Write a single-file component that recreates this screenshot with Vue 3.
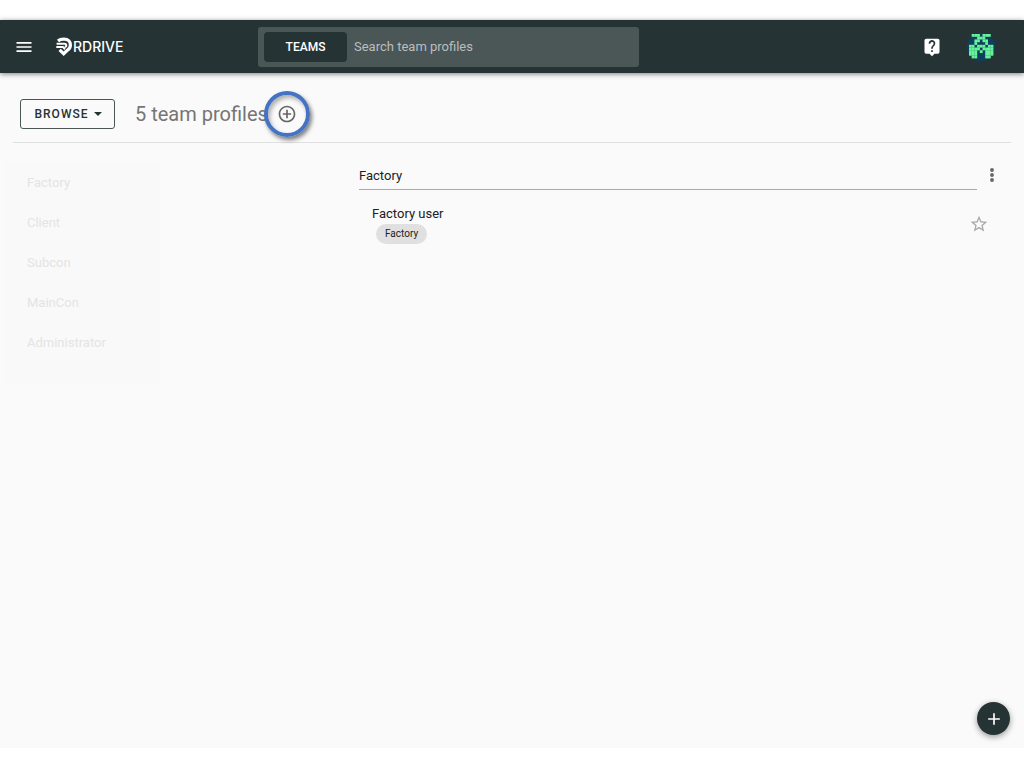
<script setup>
import { ref } from 'vue'

const query = ref('')
const groups = ['Factory', 'Client', 'Subcon', 'MainCon', 'Administrator']
const avatarRows = [
  '.XXX.XXX.',
  '...XXX...',
  '..XX.XX..',
  '..X...X..',
  'XX.XXX.XX',
  'XXXX.XXXX',
  'XXX.X.XXX',
  'XXX...XXX',
  '.XX...XX.',
]
const cells = avatarRows.flatMap((row, y) =>
  [...row].map((c, x) => ({ x, y, on: c === 'X' })).filter((c) => c.on)
)
</script>

<template>
  <div class="page">
    <header class="topbar">
      <div class="brand">
        <button class="icon-btn" aria-label="Menu">
          <svg width="20" height="20" viewBox="0 0 24 24"><path d="M3 18h18v-2H3v2zm0-5h18v-2H3v2zm0-7v2h18V6H3z" fill="#fff" /></svg>
        </button>
        <a class="logo" href="#" aria-label="RDRIVE">
          <svg width="17" height="20" viewBox="0 0 17 20" fill="none" stroke="#fff">
            <path d="M2 4C3.500 2.500 5.500 2.200 8 2.200c4 0 6.400 2.300 6.400 5.800 0 2.600-1.400 4.300-3.200 5.300L7.700 16.700 3.600 12.900" stroke-width="3.200" />
            <path d="M.6 6.700h8c2.300 0 2.300 3.300 0 3.300M.3 10h6.600l2 2.300" stroke-width="1.900" />
          </svg>
          <span>RDRIVE</span>
        </a>
      </div>
      <form class="search" @submit.prevent>
        <button class="scope" type="button">TEAMS</button>
        <input v-model="query" type="text" aria-label="Search team profiles" placeholder="Search team profiles" />
      </form>
      <div class="account">
        <button class="icon-btn" aria-label="Help">
          <svg width="20" height="20" viewBox="0 0 24 24"><path fill="#fff" d="M19 2H5a2 2 0 0 0-2 2v14a2 2 0 0 0 2 2h4l3 3 3-3h4a2 2 0 0 0 2-2V4a2 2 0 0 0-2-2zm-6 16h-2v-2h2v2zm2.070-7.750-.9.920C13.450 11.900 13 12.500 13 14h-2v-.5c0-1.100.45-2.100 1.170-2.830l1.240-1.260A2 2 0 1 0 10 8H8a4 4 0 1 1 7.070 2.250z" /></svg>
        </button>
        <button class="icon-btn" aria-label="Account">
          <svg width="28" height="28" viewBox="0 0 28 28">
            <circle cx="14" cy="14" r="14" fill="#103f5e" />
            <g transform="translate(2 1)" fill="#67f39a">
              <rect v-for="c in cells" :key="c.x + '-' + c.y" :x="c.x * 2.700" :y="c.y * 2.700" width="2.800" height="2.800" />
            </g>
          </svg>
        </button>
      </div>
    </header>

    <div class="toolbar">
      <button class="browse">BROWSE
        <svg width="10" height="6" viewBox="0 0 10 6"><path d="M1 1h8L5 5z" fill="#263335" /></svg>
      </button>
      <h1>5 team profiles</h1>
      <button class="add" aria-label="Add team profile">
        <svg width="20" height="20" viewBox="0 0 24 24"><path fill="#666" d="M13 7h-2v4H7v2h4v4h2v-4h4v-2h-4V7zm-1-5C6.480 2 2 6.480 2 12s4.480 10 10 10 10-4.480 10-10S17.520 2 12 2zm0 18c-4.410 0-8-3.590-8-8s3.590-8 8-8 8 3.590 8 8-3.590 8-8 8z" /></svg>
      </button>
    </div>

    <main class="content">
      <nav class="groups" aria-label="Profile groups">
        <a v-for="g in groups" :key="g" href="#">{{ g }}</a>
      </nav>
      <section class="profiles">
        <div class="group-head">
          <h2>Factory</h2>
          <button class="icon-btn more" aria-label="More options">
            <svg width="20" height="20" viewBox="0 0 24 24" fill="#666"><circle cx="12" cy="6" r="2.300" /><circle cx="12" cy="12" r="2.300" /><circle cx="12" cy="18" r="2.300" /></svg>
          </button>
        </div>
        <article class="profile">
          <div>
            <h3>Factory user</h3>
            <span class="chip">Factory</span>
          </div>
          <button class="icon-btn" aria-label="Add to favourites">
            <svg width="20" height="20" viewBox="0 0 24 24"><path fill="#aaa" d="M22 9.240l-7.190-.62L12 2 9.190 8.630 2 9.240l5.460 4.730L5.820 21 12 17.270 18.180 21l-1.630-7.030L22 9.240zM12 15.400l-3.760 2.270 1-4.280-3.320-2.880 4.380-.38L12 6.100l1.710 4.040 4.380.38-3.320 2.880 1 4.280L12 15.400z" /></svg>
          </button>
        </article>
      </section>
    </main>

    <button class="fab" aria-label="Create">
      <svg width="20" height="20" viewBox="0 0 24 24"><path d="M19 13h-6v6h-2v-6H5v-2h6V5h2v6h6v2z" fill="#fff" /></svg>
    </button>
  </div>
</template>

<style>
body {
  background: #fff;
}
</style>

<style scoped>
.page {
  position: relative;
  box-sizing: border-box;
  min-height: calc(100vh - 40px);
  margin: 20px 0;
  background: #fafafa;
  font-family: Roboto, "Liberation Sans", sans-serif;
  color: #212121;
  display: flow-root;
}
.page button {
  font-family: inherit;
  cursor: pointer;
}
h1,
h2,
h3 {
  margin: 0;
  font-weight: 400;
}
a {
  text-decoration: none;
}
svg {
  display: block;
}
.icon-btn {
  padding: 0;
  border: 0;
  background: none;
}
.topbar {
  display: grid;
  grid-template-columns: 258px minmax(0, 381px) 1fr;
  align-items: center;
  height: 53px;
  background: #263335;
  box-shadow: 0 1px 5px rgba(0, 0, 0, 0.5);
}
.brand {
  display: flex;
  align-items: center;
  gap: 22px;
  padding-left: 14px;
}
.logo {
  display: flex;
  align-items: center;
  color: #fff;
  font: 500 14px/20px Inter, sans-serif;
}
.search {
  display: flex;
  box-sizing: border-box;
  height: 40px;
  padding: 5px 6px;
  border-radius: 3px;
  background: #4b5657;
}
.scope {
  width: 83px;
  border: 0;
  border-radius: 4px;
  background: #263335;
  color: #fff;
  font-size: 12px;
  font-weight: 500;
}
.search input {
  flex: 1;
  min-width: 0;
  padding: 0 7px;
  border: 0;
  outline: 0;
  background: none;
  color: #fff;
  font: 13px/20px Roboto, sans-serif;
}
.search input::placeholder {
  color: #b9bebf;
  opacity: 1;
}
.account {
  display: flex;
  align-items: center;
  justify-content: flex-end;
  gap: 25px;
  padding-right: 29px;
}
.toolbar {
  display: flex;
  align-items: center;
  box-sizing: border-box;
  height: 70px;
  margin: 0 13px;
  padding: 12px 7px 0;
  border-bottom: 1px solid #e0e0e0;
}
.browse {
  display: flex;
  align-items: center;
  justify-content: center;
  gap: 4px;
  box-sizing: border-box;
  width: 95px;
  height: 30px;
  padding: 0 0 0 2px;
  border: 1px solid #4b5657;
  border-radius: 3px;
  background: none;
  color: #263335;
  font-size: 12px;
  font-weight: 500;
  letter-spacing: 1px;
}
h1 {
  margin-left: 20px;
  color: #757575;
  font-size: 20px;
  line-height: 24px;
}
.add {
  display: flex;
  align-items: center;
  justify-content: center;
  box-sizing: border-box;
  width: 46px;
  height: 46px;
  margin-left: -4px;
  padding: 0;
  border: 4px solid #4472c4;
  border-radius: 50%;
  background: none;
  box-shadow: 2px 3px 4px rgba(0, 0, 0, 0.5), inset 2px 3px 4px rgba(0, 0, 0, 0.3);
}
.content {
  display: grid;
  grid-template-columns: 154px 1fr;
  align-items: start;
  gap: 200px;
  padding: 20px 22px 0 5px;
}
.groups {
  display: flex;
  flex-direction: column;
  gap: 20px;
  padding: 10px 22px 32px;
  background: #f9f9f9;
}
.groups a {
  color: #e4e4e4;
  font-size: 13px;
  line-height: 20px;
}
.group-head {
  display: flex;
  justify-content: space-between;
  gap: 5px;
}
.more {
  padding-bottom: 4px;
}
h2 {
  flex: 1;
  padding: 3px 0;
  border-bottom: 1px solid #aaa;
  font-size: 13px;
  line-height: 20px;
}
.profile {
  display: flex;
  align-items: center;
  justify-content: space-between;
  padding: 14px 13px 0;
}
h3 {
  font-size: 13px;
  line-height: 20px;
}
.chip {
  display: block;
  width: fit-content;
  margin-left: 4px;
  padding: 0 9px;
  border-radius: 10px;
  background: #e0e0e0;
  font-size: 10px;
  line-height: 20px;
}
.fab {
  position: absolute;
  right: 14px;
  bottom: 13px;
  display: flex;
  align-items: center;
  justify-content: center;
  width: 33px;
  height: 33px;
  padding: 0;
  border: 0;
  border-radius: 50%;
  background: #263335;
  box-shadow: 0 2px 6px rgba(0, 0, 0, 0.4);
}
</style>
